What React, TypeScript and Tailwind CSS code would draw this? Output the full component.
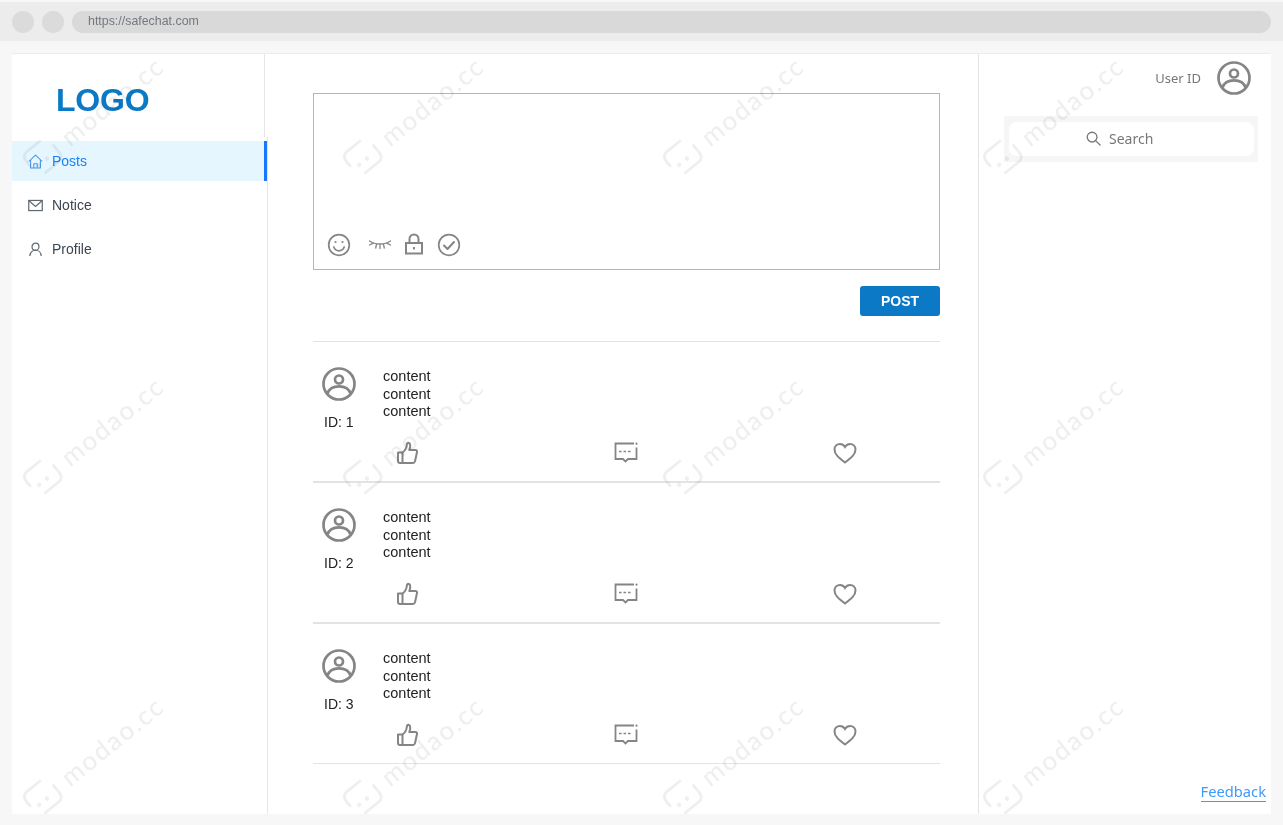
const GRAY = '#858585';

const UserCircle = () => (
  <svg width="36" height="36" viewBox="0 0 36 36" fill="none" stroke="#858585" strokeWidth="2.700">
    <circle cx="18" cy="18" r="15.500" />
    <circle cx="18" cy="13.500" r="4" />
    <path d="M6.500 27.500c1.500-4.600 6-7.200 11.500-7.200s10 2.600 11.500 7.200" />
  </svg>
);

const ThumbIcon = () => (
  <svg width="24" height="24" viewBox="0 0 24 24" fill="none" stroke={GRAY} strokeWidth="2" strokeLinejoin="round">
    <path d="M3 11.500h4.500v10.500H5a2 2 0 0 1-2-2z" />
    <path d="M7.500 11.500c2-1.500 4-4.500 4.300-7.500 0-1.800 1.200-2.500 2.200-2 1.700.8 1.500 4.500.3 7h6.200c1 0 1.800.9 1.500 2l-2 9.300c-.3 1-1 1.700-2 1.700H7.500" />
  </svg>
);

const CommentIcon = () => (
  <svg width="24" height="24" viewBox="0 0 24 24" fill="none" stroke={GRAY} strokeWidth="1.800">
    <path d="M20 2.500H1.500v15.500h7.500l2.500 2.500 2.500-2.500h8.500V6.500" />
    <path d="M5 10.500h2.600M9.500 10.500h2.600M14 10.500h2.600" strokeWidth="1.400" />
    <circle cx="22.500" cy="2.700" r="1.100" fill={GRAY} stroke="none" />
  </svg>
);

const HeartIcon = () => (
  <svg width="24" height="24" viewBox="0 0 24 24" fill="none" stroke={GRAY} strokeWidth="2">
    <path d="M12 21.500C6 17 1.500 13.500 1.500 8.500 1.500 5.200 4 3 7 3c2 0 3.800 1 5 3 1.200-2 3-3 5-3 3 0 5.500 2.200 5.500 5.500 0 5-4.500 8.500-10.500 13z" />
  </svg>
);

const Watermark = () => (
  <div className="flex h-[230px] w-[188px] items-center justify-center">
    <div className="flex shrink-0 -rotate-[39deg] items-center gap-[9px] text-[#eef0f0]">
      <svg width="36" height="32" viewBox="0 0 36 32" fill="none" stroke="currentColor" strokeWidth="2.800" strokeLinecap="round">
        <path d="M2.500 15V8a6 6 0 0 1 6-6h17" />
        <path d="M33.500 14v10a6 6 0 0 1-6 6H10" />
        <circle cx="10" cy="20" r="2.200" fill="currentColor" stroke="none" />
        <circle cx="20" cy="20" r="2.200" fill="currentColor" stroke="none" />
      </svg>
      <span className="font-['Lato',sans-serif] text-[26px] leading-none font-medium tracking-[1.800px] whitespace-nowrap">modao.cc</span>
    </div>
  </div>
);

const PostItem = ({ id, last }: { id: number; last?: boolean }) => (
  <div className={`pt-[24px] ${last ? 'h-[140px] border-b border-[#e3e3e3]' : 'h-[141px] border-b-2 border-[#e3e3e3]'}`}>
    <div className="flex h-[75px]">
      <div className="w-[70px] pl-[8px]">
        <UserCircle />
        <p className="mt-[10px] pl-[3px] text-[14px] leading-[20px] text-[#222]">ID: {id}</p>
      </div>
      <div className="pt-[2px] text-[14.500px] leading-[17.500px] text-[#222]">
        <p>content</p>
        <p>content</p>
        <p>content</p>
      </div>
    </div>
    <div className="flex gap-[195px] pl-[82px]">
      <ThumbIcon />
      <CommentIcon />
      <HeartIcon />
    </div>
  </div>
);

export default function App() {
  return (
    <div className="relative flex h-[825px] w-[1283px] flex-col overflow-hidden bg-[#f7f7f7] font-['Liberation_Sans',sans-serif]">
      {/* fake browser chrome */}
      <div className="mt-[2px] flex h-[39px] items-center gap-2 bg-[#ececec] px-3">
        <span className="h-[22px] w-[22px] rounded-full bg-[#dbdbdb]" />
        <span className="h-[22px] w-[22px] rounded-full bg-[#dbdbdb]" />
        <div className="flex h-[22px] flex-1 items-center rounded-full bg-[#d9d9d9] pl-4 text-[12.400px] text-[#737880]">
          https://safechat.com
        </div>
      </div>

      <div className="mx-3 mt-3 flex h-[761px] w-[1259px] border-t border-[#ececec] bg-white">
        <aside className="flex w-[256px] shrink-0 flex-col">
          <div className="flex h-[83px] w-[253px] items-center border-r border-[#e6e6e6] pl-[44px]">
            <span className="pt-[9px] text-[32px] leading-none font-bold tracking-[-0.200px] text-[#0b79c5]">LOGO</span>
          </div>
          <nav className="flex flex-1 flex-col gap-1 border-r border-[#e6e6e6] pt-1 text-[14px]">
            <a className="flex h-10 w-[255px] items-center gap-[9px] border-r-[3px] border-[#1677ff] bg-[#e6f6ff] pl-[16px] text-[#1a80f5]">
              <svg width="15" height="15" viewBox="0 0 16 16" fill="none" stroke="#3f92ee" strokeWidth="1.100" strokeLinejoin="round">
                <path d="M.8 8 8 1.200 15.200 8" />
                <path d="M2.800 6.500V15h10.400V6.500" />
                <path d="M6.200 15v-4.500h3.600V15" />
              </svg>
              Posts
            </a>
            <a className="flex h-10 w-[255px] items-center gap-[9px] pl-[16px] text-[#3c4650]">
              <svg width="15" height="15" viewBox="0 0 16 16" fill="none" stroke="#5f6870" strokeWidth="1.300">
                <rect x=".8" y="2.600" width="14.400" height="10.800" />
                <path d="m1 3 7 6 7-6" />
              </svg>
              Notice
            </a>
            <a className="flex h-10 w-[255px] items-center gap-[9px] pl-[16px] text-[#3c4650]">
              <svg width="15" height="15" viewBox="0 0 16 16" fill="none" stroke="#5f6870" strokeWidth="1.300">
                <circle cx="8" cy="5" r="3.700" />
                <path d="M2 15c0-3.500 2.500-6.200 6-6.200s6 2.700 6 6.200" />
              </svg>
              Profile
            </a>
          </nav>
        </aside>

        <main className="w-[710px] shrink-0 pt-[39px] pl-[45px]">
          <div className="w-[627px]">
            <div className="flex h-[177px] items-end gap-[17px] border border-[#b5b5b5] pb-[12px] pl-[13px]">
              <svg width="24" height="24" viewBox="0 0 24 24" fill="none" stroke={GRAY} strokeWidth="1.700" strokeLinecap="round">
                <circle cx="12" cy="12" r="10.300" />
                <path d="M6.800 14c1 2.600 3 3.800 5.200 3.800s4.200-1.200 5.200-3.800" />
                <circle cx="8.500" cy="9" r="1.100" fill={GRAY} stroke="none" />
                <circle cx="15.500" cy="9" r="1.100" fill={GRAY} stroke="none" />
              </svg>
              <svg width="24" height="24" viewBox="0 0 24 24" fill="none" stroke={GRAY} strokeWidth="1.300" strokeLinecap="round">
                <path d="M1.500 8C7 12 17 12 22.500 8" />
                <path d="M1.500 12 5 10.300M22.500 12 19 10.300M8.500 11.500l-.8 3.500M12 12v3.500M15.500 11.500l.8 3.500" />
              </svg>
              <svg className="-ml-[5px]" width="20" height="24" viewBox="0 0 20 24" fill="none" stroke={GRAY} strokeWidth="2">
                <rect x="2" y="10" width="16" height="10.500" />
                <path d="M5.500 10V6a4.500 4.500 0 0 1 9 0v4" />
                <path d="M10 14v2.500" />
              </svg>
              <svg className="-ml-[4px]" width="24" height="24" viewBox="0 0 24 24" fill="none" stroke={GRAY} strokeWidth="1.700" strokeLinecap="round" strokeLinejoin="round">
                <circle cx="12" cy="12" r="10.300" />
                <path d="m7 12.500 3.500 3.500 6.500-7" strokeWidth="2" />
              </svg>
            </div>

            <div className="mt-4 flex justify-end">
              <button className="h-[30px] w-20 rounded-[3px] bg-[#0b79c5] text-[14px] font-bold text-white">POST</button>
            </div>

            <div className="mt-[25px] border-t border-[#e3e3e3]">
              <PostItem id={1} />
              <PostItem id={2} />
              <PostItem id={3} last />
            </div>
          </div>
        </main>

        <section className="flex flex-1 flex-col border-l border-[#e3e3e3] pt-[6px] font-['Noto_Sans',sans-serif]">
          <div className="flex items-center justify-end gap-[15px] pr-[19px]">
            <span className="pt-[2px] text-[13px] text-[#777]">User ID</span>
            <UserCircle />
          </div>
          <div className="mt-[20px] ml-[25px] h-[46px] w-[254px] bg-[#f6f6f6] pt-[6px] pl-[5px]">
            <div className="flex h-[34px] w-[245px] items-center gap-2 rounded-lg bg-white pb-[2px] pl-[77px] text-[14px] text-[#777]">
              <svg width="15" height="15" viewBox="0 0 16 16" fill="none" stroke="#777" strokeWidth="1.400" strokeLinecap="round">
                <circle cx="6.500" cy="6.500" r="5.200" />
                <path d="m10.500 10.500 4.500 4.500" />
              </svg>
              Search
            </div>
          </div>
          <div className="mt-auto flex justify-end pr-[5px] pb-[12px]">
            <a className="border-b-[1.500px] border-[#3d9bfb] text-[14.700px] leading-[19px] text-[#3d9bfb]">Feedback</a>
          </div>
        </section>
      </div>

      {/* watermark tiles, multiplied so text stays on top */}
      <div className="pointer-events-none absolute inset-0 grid grid-cols-[repeat(4,320px)] auto-rows-[320px] mix-blend-multiply">
        {Array.from({ length: 12 }, (_, i) => (
          <Watermark key={i} />
        ))}
      </div>
    </div>
  );
}
